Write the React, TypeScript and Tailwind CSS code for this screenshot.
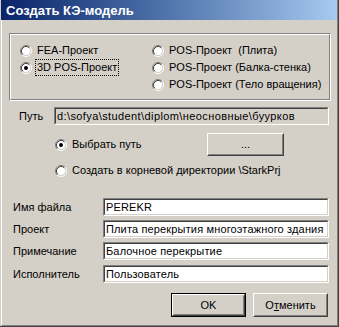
import React from "react";

const font = { fontFamily: '"Liberation Sans", Arial, sans-serif' };

function Radio({ checked = false }: { checked?: boolean }) {
  return (
    <svg width="12" height="12" viewBox="0 0 12 12" className="shrink-0">
      <circle cx="6" cy="6" r="4.5" fill="#ffffff" />
      <path d="M2.11 9.89 A5.5 5.5 0 0 1 9.89 2.11" fill="none" stroke="#808080" />
      <path d="M9.89 2.11 A5.5 5.5 0 0 1 2.11 9.89" fill="none" stroke="#ffffff" />
      <path d="M2.82 9.18 A4.5 4.5 0 0 1 9.18 2.82" fill="none" stroke="#404040" />
      <path d="M9.18 2.82 A4.5 4.5 0 0 1 2.82 9.18" fill="none" stroke="#d4d0c8" />
      {checked && <circle cx="6" cy="6" r="2" fill="#000000" />}
    </svg>
  );
}

function RadioRow({
  label,
  checked,
  focus,
}: {
  label: string;
  checked?: boolean;
  focus?: boolean;
}) {
  return (
    <div className="flex h-[17px] items-center">
      <Radio checked={checked} />
      <span
        className={
          focus
            ? "ml-[3px] border border-dotted border-black px-[1px] leading-[15px] whitespace-pre"
            : "ml-[5px] leading-[15px] whitespace-pre"
        }
      >
        {label}
      </span>
    </div>
  );
}

function Sunken({
  children,
  className,
  bg,
}: {
  children: React.ReactNode;
  className: string;
  bg: string;
}) {
  return (
    <div
      className={
        "border border-t-[#808080] border-l-[#808080] border-b-white border-r-white " +
        className
      }
    >
      <div
        className={
          "h-full border border-t-[#404040] border-l-[#404040] border-b-[#d4d0c8] border-r-[#d4d0c8] flex items-center pl-[1px] overflow-hidden whitespace-nowrap " +
          bg
        }
      >
        {children}
      </div>
    </div>
  );
}

function Button({
  children,
  className,
  isDefault,
}: {
  children: React.ReactNode;
  className: string;
  isDefault?: boolean;
}) {
  const inner = (
    <div className="h-full border border-t-white border-l-white border-b-[#404040] border-r-[#404040]">
      <div className="h-full border border-t-[#d4d0c8] border-l-[#d4d0c8] border-b-[#808080] border-r-[#808080] flex items-center justify-center">
        {children}
      </div>
    </div>
  );
  return isDefault ? (
    <div className={"border border-black " + className}>{inner}</div>
  ) : (
    <div className={className}>{inner}</div>
  );
}

function FieldRow({ label, value, mt }: { label: string; value: string; mt: string }) {
  return (
    <div className={"flex items-center " + mt}>
      <div className="w-[101px] pl-[11px]">{label}</div>
      <Sunken className="w-[226px] h-[18px]" bg="bg-white">
        <span className="tracking-[0.15px]">{value}</span>
      </Sunken>
    </div>
  );
}

export default function App() {
  return (
    <div
      className="w-[339px] h-[327px] bg-[#d4d0c8] text-black text-[11px] border-r border-b border-r-[#404040] border-b-[#404040] flex flex-col"
      style={font}
    >
      <div className="ml-[1px] flex-1 flex flex-col border-l border-l-white border-r border-b border-r-[#808080] border-b-[#808080]">
        <div className="-ml-[1px] h-[20px] w-[336px] bg-gradient-to-r from-[#0a246a] to-[#a6caf0] flex items-center pl-[5px]">
          <span className="text-white font-bold text-[13px] leading-none">Создать КЭ-модель</span>
        </div>

        {/* Group box */}
        <div className="mt-[13px] ml-[7px] w-[322px] h-[68px] border border-[#808080] border-r-white border-b-white">
          <div className="h-full border border-white border-r-[#808080] border-b-[#808080] flex pt-[7px]">
            <div className="ml-[9px] w-[132px] flex flex-col">
              <RadioRow label="FEA-Проект" />
              <RadioRow label="3D POS-Проект" checked focus />
            </div>
            <div className="ml-0 flex flex-col">
              <RadioRow label="POS-Проект  (Плита)" />
              <RadioRow label="POS-Проект (Балка-стенка)" />
              <RadioRow label="POS-Проект (Тело вращения)" />
            </div>
          </div>
        </div>

        {/* Path */}
        <div className="mt-[6px] flex items-center">
          <div className="w-[52px] pl-[17px]">Путь</div>
          <Sunken className="w-[275px] h-[18px]" bg="bg-[#d4d0c8]">
            <span className="tracking-[0.4px]">d:\sofya\student\diplom\неосновные\буурков</span>
          </Sunken>
        </div>

        <div className="mt-[8px] flex items-center h-[23px]">
          <div className="ml-[53px] w-[152px]">
            <RadioRow label="Выбрать путь" checked />
          </div>
          <Button className="w-[77px] h-[23px]">...</Button>
        </div>
        <div className="mt-[6px] ml-[53px]">
          <RadioRow label="Создать в корневой директории \StarkPrj" />
        </div>

        <FieldRow label="Имя файла" value="PEREKR" mt="mt-[19px]" />
        <FieldRow label="Проект" value="Плита перекрытия многоэтажного здания" mt="mt-[4px]" />
        <FieldRow label="Примечание" value="Балочное перекрытие" mt="mt-[4px]" />
        <FieldRow label="Исполнитель" value="Пользователь" mt="mt-[5px]" />

        <div className="mt-[10px] flex">
          <Button className="ml-[169px] w-[75px] h-[24px]" isDefault>
            OK
          </Button>
          <Button className="ml-[7px] w-[75px] h-[24px]">
            <span>
              О<span className="underline">т</span>менить
            </span>
          </Button>
        </div>
      </div>
    </div>
  );
}
